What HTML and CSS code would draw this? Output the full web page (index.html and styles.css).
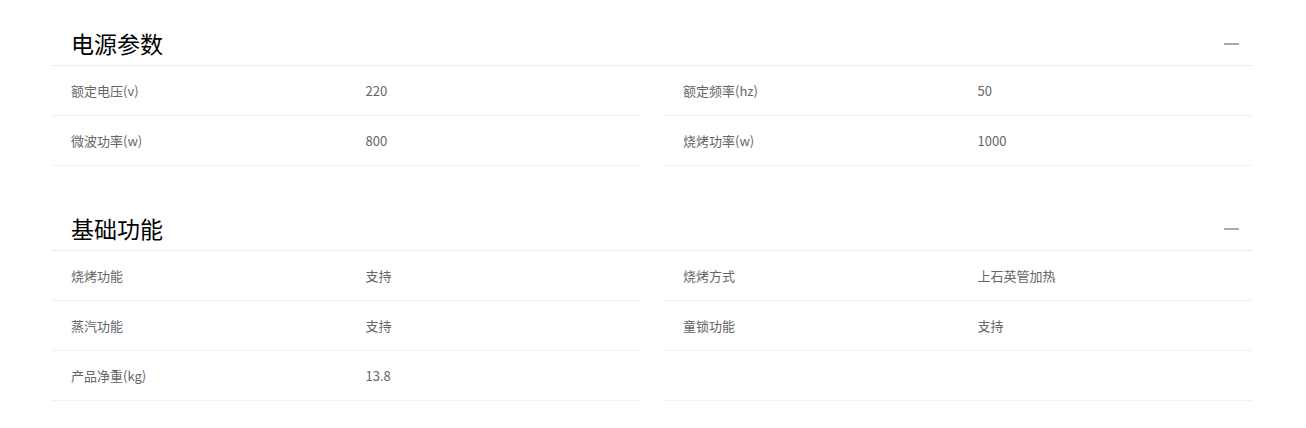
FILE: index.html
```html
<!DOCTYPE html>
<html lang="zh-CN">
<head>
<meta charset="utf-8">
<title>参数</title>
<link rel="stylesheet" href="styles.css">
</head>
<body>
<div class="page">
  <section class="group">
    <div class="group-head">
      <h2 class="group-title">电源参数</h2>
      <span class="toggle" aria-label="收起"></span>
    </div>
    <div class="grid">
      <div class="col">
        <div class="row"><span class="label">额定电压(v)</span><span class="value">220</span></div>
        <div class="row"><span class="label">微波功率(w)</span><span class="value">800</span></div>
      </div>
      <div class="col">
        <div class="row"><span class="label">额定频率(hz)</span><span class="value">50</span></div>
        <div class="row"><span class="label">烧烤功率(w)</span><span class="value">1000</span></div>
      </div>
    </div>
  </section>
  <section class="group">
    <div class="group-head">
      <h2 class="group-title">基础功能</h2>
      <span class="toggle" aria-label="收起"></span>
    </div>
    <div class="grid">
      <div class="col">
        <div class="row"><span class="label">烧烤功能</span><span class="value">支持</span></div>
        <div class="row"><span class="label">蒸汽功能</span><span class="value">支持</span></div>
        <div class="row"><span class="label">产品净重(kg)</span><span class="value">13.8</span></div>
      </div>
      <div class="col">
        <div class="row"><span class="label">烧烤方式</span><span class="value">上石英管加热</span></div>
        <div class="row"><span class="label">童锁功能</span><span class="value">支持</span></div>
        <div class="row"><span class="label"></span><span class="value"></span></div>
      </div>
    </div>
  </section>
</div>
</body>
</html>
```
FILE: styles.css
```css
* { box-sizing: border-box; }
html, body { margin: 0; padding: 0; background: #fff; }
body {
  font-family: "Noto Sans CJK SC", "Noto Sans", sans-serif;
  color: #666;
}
.page {
  width: 1200px;
  margin: 0 0 0 52px;
  padding-top: 20px;
  display: flex;
  flex-direction: column;
  gap: 39px;
}
.group-head {
  height: 46px;
  display: flex;
  align-items: center;
  justify-content: space-between;
  border-bottom: 1px solid #ebebeb;
  padding: 0 13px 0 19px;
}
.group-title {
  margin: 0;
  font-size: 23px;
  font-weight: 400;
  color: #000;
  line-height: 1;
  position: relative;
  top: 1px;
}
.toggle {
  width: 15px;
  height: 2px;
  background: #aaa;
  position: relative;
  top: 1px;
}
.grid {
  display: grid;
  grid-template-columns: 1fr 1fr;
  column-gap: 24px;
}
.row {
  height: 50px;
  border-bottom: 1px solid #f1f1f1;
  display: grid;
  grid-template-columns: 1fr 1fr;
  align-items: center;
  padding-left: 19px;
  font-size: 13px;
  line-height: 1;
}
.label, .value { color: #666; }
.value { padding-left: 10px; }
```
